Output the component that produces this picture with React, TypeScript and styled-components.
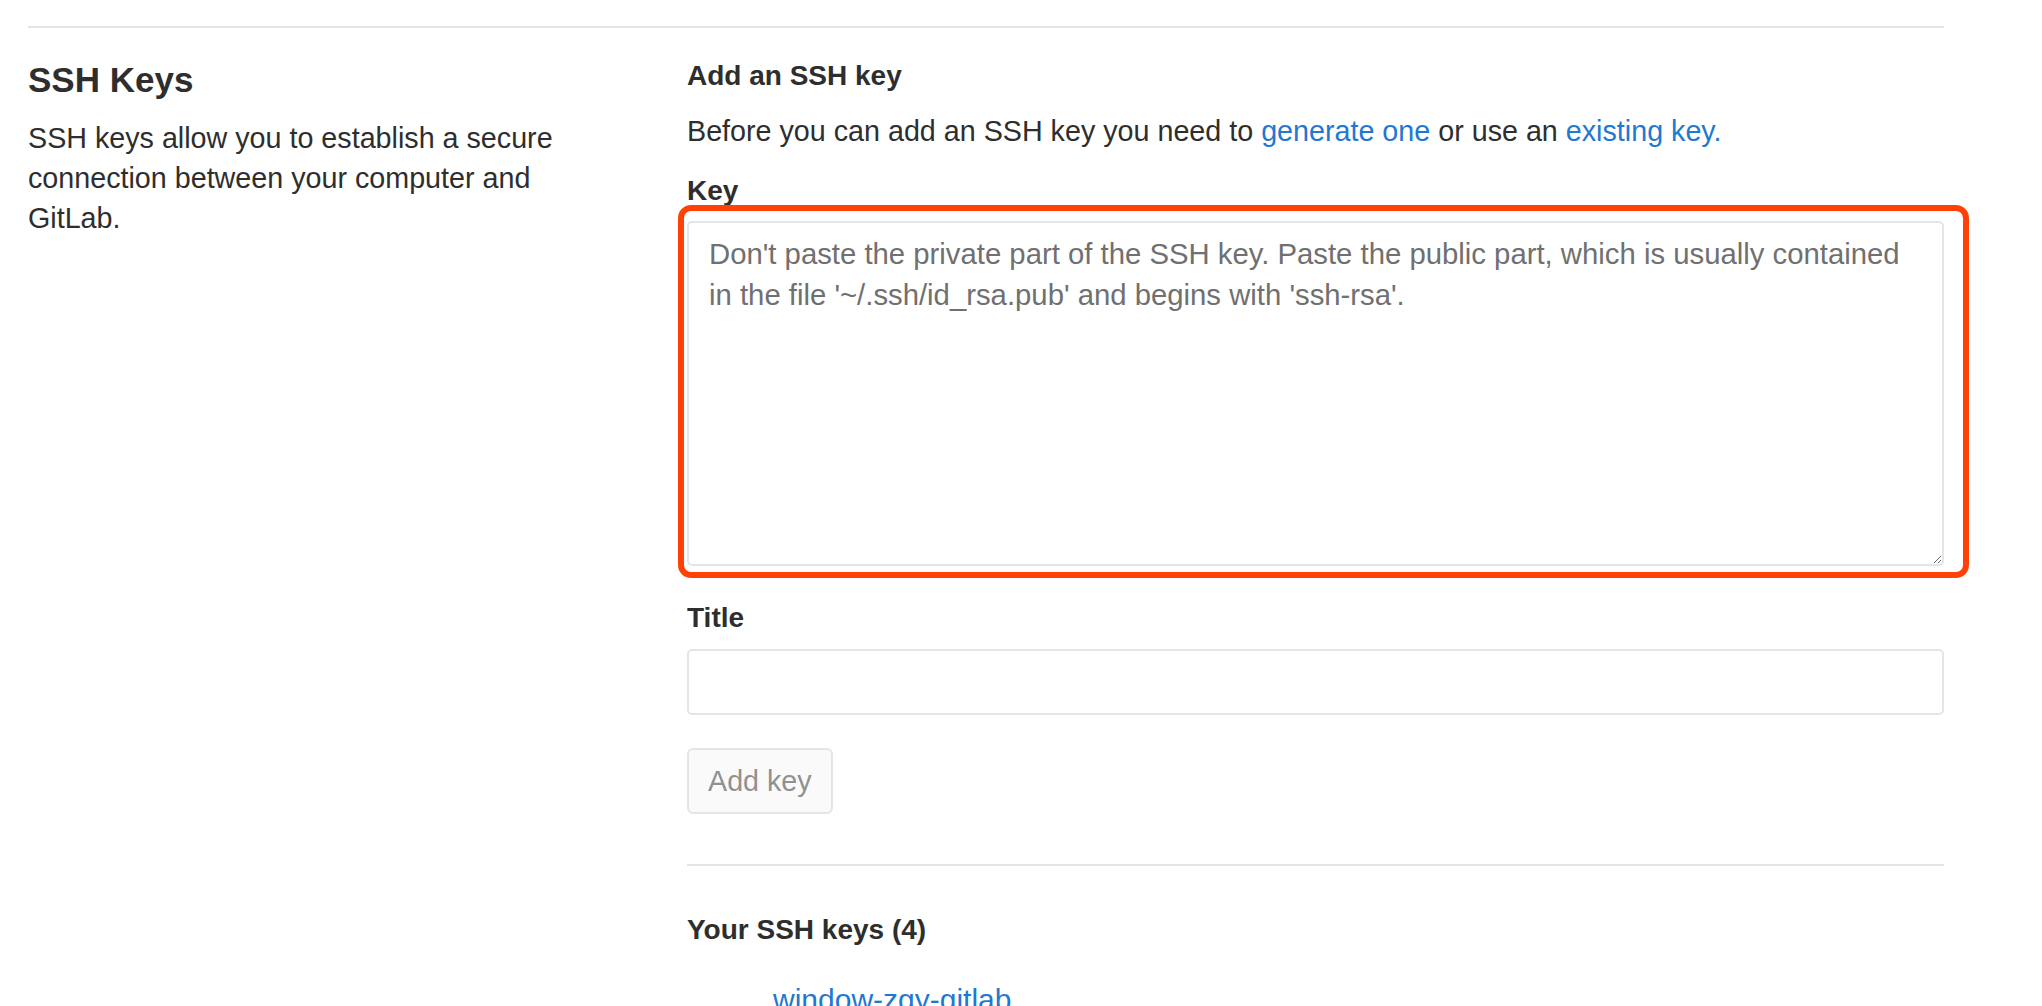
import React from 'react';
import styled, { createGlobalStyle } from 'styled-components';

const GlobalStyle = createGlobalStyle`
  html, body { margin: 0; padding: 0; background: #ffffff; }
  body {
    font-family: "Liberation Sans", Arial, Helvetica, sans-serif;
    color: #2e2e2e;
    -webkit-font-smoothing: antialiased;
  }
  *, *::before, *::after { box-sizing: border-box; }
`;

const Page = styled.div`
  padding: 26px 98px 0 28px;
`;

const Rule = styled.hr<{ $gap?: number }>`
  margin: ${(p) => p.$gap ?? 0}px 0 0;
  border: 0;
  height: 2px;
  background: #e5e5e5;
`;

const Section = styled.section`
  display: grid;
  grid-template-columns: 575px 1fr;
  column-gap: 84px;
`;

const Aside = styled.div`
  padding-top: 31px;
`;

const SectionTitle = styled.h4`
  margin: 0;
  font-size: 35px;
  line-height: 42px;
  font-weight: 700;
  color: #2e2e2e;
`;

const SectionText = styled.p`
  margin: 17px 0 0;
  font-size: 28.7px;
  line-height: 40px;
  color: #2e2e2e;
`;

const Main = styled.div`
  padding-top: 28px;
  display: flex;
  flex-direction: column;
  align-items: stretch;
`;

const SubTitle = styled.h5<{ $gap?: number }>`
  margin: ${(p) => p.$gap ?? 0}px 0 0;
  font-size: 28px;
  line-height: 40px;
  font-weight: 700;
  color: #2e2e2e;
`;

const Lead = styled.p`
  margin: 15px 0 0;
  font-size: 28.7px;
  line-height: 40px;
`;

const Link = styled.a`
  color: #1f78d1;
  text-decoration: none;
`;

const Label = styled.label<{ $gap: number }>`
  display: block;
  margin-top: ${(p) => p.$gap}px;
  font-size: 28px;
  line-height: 40px;
  font-weight: 700;
  color: #2e2e2e;
`;

const FieldFrame = styled.div`
  position: relative;
  margin-top: 10px;
  display: flex;
`;

const Highlight = styled.div`
  position: absolute;
  top: -16px;
  left: -9px;
  right: -25px;
  bottom: -12px;
  border: 6px solid #ff4108;
  border-radius: 13px;
  pointer-events: none;
`;

const KeyArea = styled.textarea`
  display: block;
  width: 100%;
  height: 345px;
  margin: 0;
  padding: 10px 26px 10px 20px;
  border: 2px solid #e5e5e5;
  border-radius: 5px;
  background: #ffffff;
  font-family: "Liberation Sans", Arial, Helvetica, sans-serif;
  font-size: 29.3px;
  line-height: 41px;
  color: #2e2e2e;
  resize: vertical;
  outline: none;
  &::placeholder {
    color: #707070;
    opacity: 1;
  }
`;

const TextInput = styled.input`
  display: block;
  width: 100%;
  height: 66px;
  margin: 11px 0 0;
  padding: 0 20px;
  border: 2px solid #e5e5e5;
  border-radius: 5px;
  background: #ffffff;
  font-family: "Liberation Sans", Arial, Helvetica, sans-serif;
  font-size: 28px;
  color: #2e2e2e;
  outline: none;
`;

const Actions = styled.div`
  margin-top: 33px;
  display: flex;
`;

const Button = styled.button`
  height: 66px;
  padding: 0 19px;
  border: 2px solid #e5e5e5;
  border-radius: 6px;
  background: #fafafa;
  font-family: "Liberation Sans", Arial, Helvetica, sans-serif;
  font-size: 28.7px;
  line-height: 40px;
  color: #919191;
  cursor: not-allowed;
`;

const KeyList = styled.ul`
  list-style: none;
  margin: 30px 0 0;
  padding: 0;
`;

const KeyRow = styled.li`
  padding-left: 86px;
  font-size: 30px;
  line-height: 40px;
  padding-bottom: 40px;
`;

export default function App() {
  return (
    <>
      <GlobalStyle />
      <Page>
        <Rule />
        <Section>
          <Aside>
            <SectionTitle>SSH Keys</SectionTitle>
            <SectionText>
              SSH keys allow you to establish a secure connection between your computer and GitLab.
            </SectionText>
          </Aside>
          <Main>
            <SubTitle>Add an SSH key</SubTitle>
            <Lead>
              Before you can add an SSH key you need to <Link href="#">generate one</Link> or use an{' '}
              <Link href="#">existing key.</Link>
            </Lead>
            <Label $gap={20} htmlFor="key">Key</Label>
            <FieldFrame>
              <KeyArea
                id="key"
                placeholder="Don't paste the private part of the SSH key. Paste the public part, which is usually contained in the file '~/.ssh/id_rsa.pub' and begins with 'ssh-rsa'."
              />
              <Highlight />
            </FieldFrame>
            <Label $gap={32} htmlFor="title">Title</Label>
            <TextInput id="title" type="text" />
            <Actions>
              <Button type="button" disabled>Add key</Button>
            </Actions>
            <Rule $gap={50} />
            <SubTitle $gap={44}>Your SSH keys (4)</SubTitle>
            <KeyList>
              <KeyRow>
                <Link href="#">window-zgy-gitlab</Link>
              </KeyRow>
            </KeyList>
          </Main>
        </Section>
      </Page>
    </>
  );
}
